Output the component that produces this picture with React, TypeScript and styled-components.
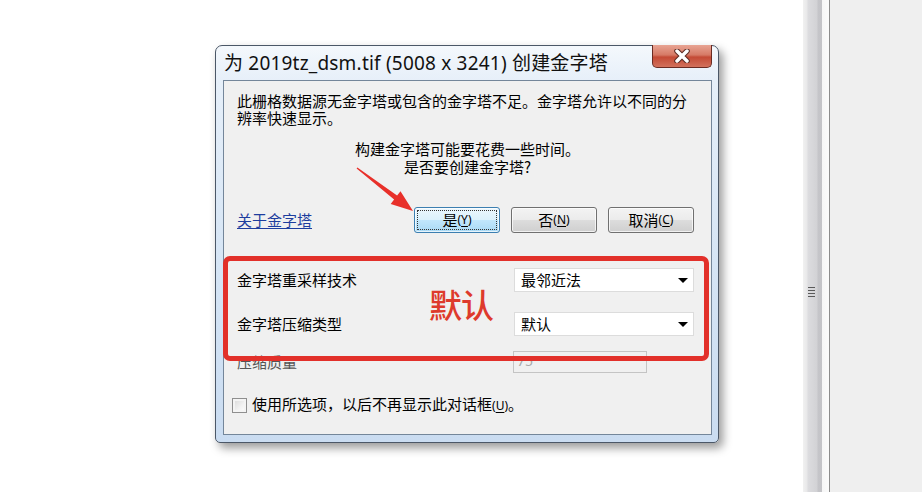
import React from 'react'
import styled, { createGlobalStyle } from 'styled-components'

const GlobalStyle = createGlobalStyle`
  html, body {
    margin: 0;
    padding: 0;
    background: #fff;
  }
  body {
    font-family: "Noto Sans", "Noto Sans CJK SC", sans-serif;
    color: #000;
  }
`

const Page = styled.div`
  display: flex;
  width: 922px;
  height: 492px;
  overflow: hidden;
`
const Workspace = styled.div`
  position: relative;
  width: 803px;
  flex-shrink: 0;
  box-sizing: border-box;
  padding: 45px 0 0 215px;
  background: #fff;
`
const Splitter = styled.div`
  width: 27px;
  flex-shrink: 0;
  box-sizing: border-box;
  padding: 287px 0 0 5px;
  border-right: 1px solid #8c8c8c;
  background: linear-gradient(90deg, #f1f1f1 0, #e8e8e9 4px, #dcdcdf 5px, #d2d2d5 14px, #c5c5c9 15px, #c3c3c7 19px, #f6f6f6 19px, #fbfbfb 26px);
`
const GripLine = styled.div`
  width: 7px;
  height: 1px;
  margin-bottom: 2px;
  background: #5a5a5a;
`
const RightPanel = styled.div`
  flex: 1;
  background: #efefef;
`

/* dialog frame */
const Window = styled.div`
  width: 504px;
  height: 398px;
  box-sizing: border-box;
  display: flex;
  flex-direction: column;
  border: 1px solid #4b5767;
  border-radius: 7px 7px 5px 5px;
  background: linear-gradient(180deg, #f4f8fc 0%, #e6eff9 9%, #d6e5f5 55%, #cadcf1 100%);
  box-shadow: 4px 5px 10px rgba(0, 0, 0, 0.4);
`
const TitleBar = styled.div`
  height: 34px;
  flex-shrink: 0;
  display: flex;
  align-items: center;
`
const Title = styled.div`
  padding-left: 8px;
  font-size: 19px;
  line-height: 22px;
  letter-spacing: 0.2px;
  color: #111;
  white-space: nowrap;
`
const CloseButton = styled.div`
  align-self: flex-start;
  margin: -1px 6px 0 auto;
  width: 60px;
  height: 23px;
  box-sizing: border-box;
  display: flex;
  align-items: center;
  justify-content: center;
  border: 1px solid #6a2b22;
  border-top: none;
  border-radius: 0 0 5px 5px;
  background: linear-gradient(180deg, #e8a493 0%, #d67a66 45%, #c44a35 55%, #d2715c 100%);
`
const Client = styled.div`
  position: relative;
  flex: 1;
  margin: 0 6px 7px 7px;
  display: flex;
  flex-direction: column;
  border: 1px solid #74869a;
  background: #f0f0f0;
  font-family: "Noto Sans CJK SC", sans-serif;
  font-size: 15px;
`
const Message = styled.p`
  margin: 11px 0 0 13px;
  line-height: 17px;
  white-space: nowrap;
`
const Question = styled.p`
  margin: 14px 0 0;
  line-height: 18px;
  text-align: center;
`
const ButtonRow = styled.div`
  display: flex;
  align-items: center;
  gap: 11px;
  margin-top: 31px;
  padding: 0 17px 0 13px;
`
const HelpLink = styled.a`
  margin-right: auto;
  color: #1d3d9e;
  text-decoration: underline;
  text-underline-offset: 2px;
  line-height: 18px;
`
const DialogButton = styled.div<{ $primary?: boolean }>`
  position: relative;
  width: 86px;
  height: 26px;
  box-sizing: border-box;
  display: flex;
  align-items: center;
  justify-content: center;
  border: 1px solid ${p => (p.$primary ? '#3c7fb1' : '#707070')};
  border-radius: 3px;
  background: ${p => (p.$primary
    ? 'linear-gradient(180deg, #ecf7fd 0%, #dbf1fc 50%, #c2e7fc 50%, #a9d9f4 100%)'
    : 'linear-gradient(180deg, #f3f3f3 0%, #ebebeb 50%, #dddddd 50%, #cfcfcf 100%)')};
  box-shadow: inset 0 0 0 1px rgba(255, 255, 255, 0.7);
  line-height: 18px;
  &::after {
    content: '';
    display: ${p => (p.$primary ? 'block' : 'none')};
    position: absolute;
    inset: 2px;
    border: 1px dotted #333;
  }
`
const Mnemonic = styled.span`
  font-family: "Noto Sans", sans-serif;
  font-size: 12px;
  u {
    text-underline-offset: 2px;
  }
`
const OptionRow = styled.div<{ $gap: number }>`
  display: grid;
  grid-template-columns: 277px 1fr;
  align-items: center;
  margin-top: ${p => p.$gap}px;
  padding-left: 13px;
`
const OptionLabel = styled.span<{ $disabled?: boolean }>`
  line-height: 18px;
  color: ${p => (p.$disabled ? '#555' : '#000')};
`
const Combo = styled.div`
  width: 180px;
  height: 24px;
  box-sizing: border-box;
  display: flex;
  align-items: center;
  padding: 0 5px 0 6px;
  border: 1px solid #dcdcdc;
  background: #fff;
  line-height: 18px;
`
const ComboArrow = styled.span`
  margin-left: auto;
  width: 0;
  height: 0;
  border-left: 5px solid transparent;
  border-right: 5px solid transparent;
  border-top: 5px solid #000;
`
const TextBox = styled.div`
  width: 134px;
  height: 22px;
  margin-left: -1px;
  box-sizing: border-box;
  padding-left: 3px;
  border: 1px solid #c4c4c4;
  background: #f0f0f0;
  color: #a8a8a8;
  font-family: "Noto Sans", sans-serif;
  font-size: 14px;
  line-height: 18px;
`
const CheckRow = styled.label`
  display: flex;
  align-items: center;
  gap: 5px;
  margin-top: 22px;
  padding-left: 8px;
  line-height: 18px;
`
const CheckBox = styled.span`
  width: 15px;
  height: 15px;
  box-sizing: border-box;
  border: 1px solid #8f8f8f;
  background: linear-gradient(135deg, #d8d8d8 0%, #f2f2f2 60%, #ffffff 100%);
  box-shadow: inset 0 0 0 2px #f4f4f4;
`

/* red markup drawn over the screenshot */
const MarkBox = styled.div`
  position: absolute;
  left: 223px;
  top: 256px;
  width: 486px;
  height: 105px;
  box-sizing: border-box;
  border: 5px solid #e2302a;
  border-radius: 7px;
  pointer-events: none;
`
const MarkText = styled.div`
  position: absolute;
  left: 429px;
  top: 284px;
  font-family: "Noto Sans CJK SC", sans-serif;
  font-size: 33px;
  font-weight: 500;
  line-height: 40px;
  color: #de3a2c;
  letter-spacing: -1px;
`
const MarkArrow = styled.svg`
  position: absolute;
  left: 350px;
  top: 160px;
`

function CloseGlyph () {
  return <svg width="18" height="14" viewBox="0 0 18 14">
    <path d="M4 2 L14 12 M14 2 L4 12" stroke="#5b2a22" strokeWidth="5.5" strokeLinecap="round" />
    <path d="M4 2 L14 12 M14 2 L4 12" stroke="#fff" strokeWidth="3.5" strokeLinecap="round" />
  </svg>
}

function Mn (props: { k: string }) {
  return <Mnemonic>(<u>{props.k}</u>)</Mnemonic>
}

export default function App () {
  return <Page>
    <GlobalStyle />
    <Workspace>
      <Window>
        <TitleBar>
          <Title>为 2019tz_dsm.tif (5008 x 3241) 创建金字塔</Title>
          <CloseButton><CloseGlyph /></CloseButton>
        </TitleBar>
        <Client>
          <Message>
            此栅格数据源无金字塔或包含的金字塔不足。金字塔允许以不同的分<br />
            辨率快速显示。
          </Message>
          <Question>
            构建金字塔可能要花费一些时间。<br />
            是否要创建金字塔?
          </Question>
          <ButtonRow>
            <HelpLink>关于金字塔</HelpLink>
            <DialogButton $primary>是<Mn k="Y" /></DialogButton>
            <DialogButton>否<Mn k="N" /></DialogButton>
            <DialogButton>取消<Mn k="C" /></DialogButton>
          </ButtonRow>
          <OptionRow $gap={35}>
            <OptionLabel>金字塔重采样技术</OptionLabel>
            <Combo>最邻近法<ComboArrow /></Combo>
          </OptionRow>
          <OptionRow $gap={20}>
            <OptionLabel>金字塔压缩类型</OptionLabel>
            <Combo>默认<ComboArrow /></Combo>
          </OptionRow>
          <OptionRow $gap={15}>
            <OptionLabel $disabled>压缩质量</OptionLabel>
            <TextBox>75</TextBox>
          </OptionRow>
          <CheckRow>
            <CheckBox />
            <span>使用所选项，以后不再显示此对话框<Mn k="U" />。</span>
          </CheckRow>
        </Client>
      </Window>
      <MarkBox />
      <MarkText>默认</MarkText>
      <MarkArrow width="70" height="60" viewBox="0 0 70 60">
        <polygon
          points="7.4,7.5 47.1,35.6 50.5,31.3 63,51 40.7,43.9 44.1,39.6 6.6,8.5"
          fill="#e8302a" />
      </MarkArrow>
    </Workspace>
    <Splitter>
      <GripLine /><GripLine /><GripLine /><GripLine />
    </Splitter>
    <RightPanel />
  </Page>
}
